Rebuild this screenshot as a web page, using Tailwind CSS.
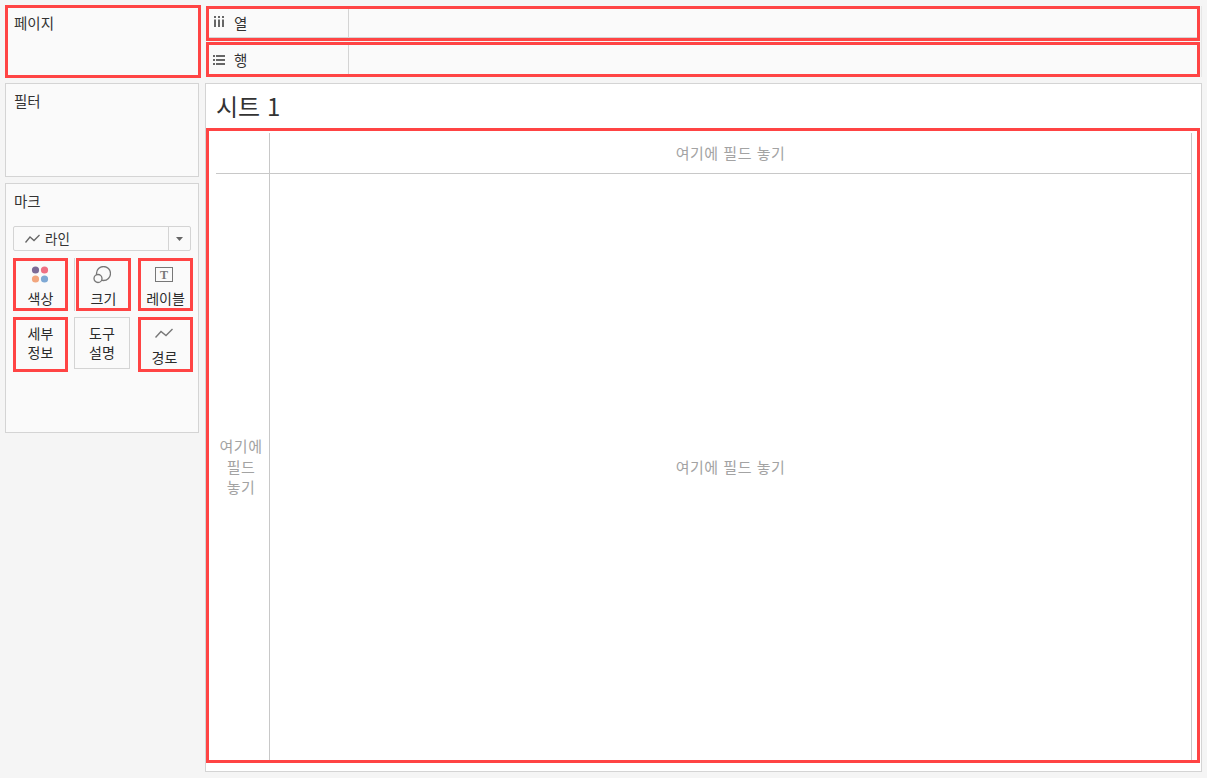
<!DOCTYPE html>
<html lang="ko">
<head>
    <meta charset="UTF-8">
    <title>시트 1</title>
    <script src="https://cdn.jsdelivr.net/npm/@tailwindcss/browser@4"></script>
</head>
<body class="bg-[#f5f5f5] font-['Noto_Sans_CJK_KR','Liberation_Sans',sans-serif] text-[#333]">
    <div class="flex h-screen overflow-hidden">

        <!-- Left column -->
        <aside class="w-[205px] shrink-0 pl-[5px] pt-[5px]">
            <div class="h-[73px] w-[196px] border-[3px] border-[#ff4444] bg-[#fafafa] pl-[6px] pt-[3px] text-[14.5px] leading-[24px]">페이지</div>

            <div class="mt-[5px] h-[94px] w-[194px] border border-[#d4d4d4] bg-[#fafafa] pl-[8px] pt-[5px] text-[14.5px] leading-[24px]">필터</div>

            <div class="mt-[6px] h-[250px] w-[194px] border border-[#d4d4d4] bg-[#fafafa] pt-[5px]">
                <div class="pl-[8px] text-[14.5px] leading-[24px]">마크</div>

                <!-- Mark type -->
                <div class="mt-[13px] ml-[7px] flex h-[25px] w-[178px] items-center rounded-[2px] border border-[#d4d4d4]">
                    <div class="flex flex-1 items-center pl-[11px]">
                        <svg width="15" height="10" viewBox="0 0 15 10" fill="none" stroke="#666" stroke-width="1.3"><path d="M0.5 8.5 L5 3 L9 6.5 L14.5 1"/></svg>
                        <span class="-mt-px ml-[5px] text-[13.5px] leading-[20px]">라인</span>
                    </div>
                    <div class="flex h-full w-[22px] items-center justify-center border-l border-[#d4d4d4] pr-px">
                        <svg width="7" height="4" viewBox="0 0 7 4"><path d="M0 0 H7 L3.5 4 Z" fill="#666"/></svg>
                    </div>
                </div>

                <!-- Mark cards, first row -->
                <div class="mt-[7px] ml-[7px] flex text-[14px] leading-[19px] text-[#2b2b2b]">
                    <div class="flex h-[53px] w-[55px] flex-col items-center border-[3px] border-[#ff4444] pt-[5px]">
                        <svg class="-ml-[2px]" width="18" height="18" viewBox="0 0 18 18">
                            <circle cx="4.5" cy="4" r="3.6" fill="#7b6a96"/>
                            <circle cx="13.5" cy="4" r="3.6" fill="#ef7083"/>
                            <circle cx="4.5" cy="13" r="3.6" fill="#f2a67e"/>
                            <circle cx="13.5" cy="13" r="3.6" fill="#7ea8d4"/>
                        </svg>
                        <span class="mt-[5px]">색상</span>
                    </div>
                    <div class="ml-[6px] border-l border-[#d4d4d4] pl-px">
                        <div class="flex h-[53px] w-[55px] flex-col items-center border-[3px] border-[#ff4444] pt-[5px]">
                            <svg class="-ml-[3px]" width="18" height="18" viewBox="0 0 18 18" fill="none" stroke="#777" stroke-width="1.3">
                                <circle cx="10.5" cy="7.5" r="7"/>
                                <circle cx="5" cy="12.5" r="4" fill="#fafafa"/>
                            </svg>
                            <span class="mt-[5px]">크기</span>
                        </div>
                    </div>
                    <div class="ml-[7px] flex h-[53px] w-[55px] flex-col items-center border-[3px] border-[#ff4444] pt-[6px]">
                        <div class="-ml-[3px] flex h-[15px] w-[18px] items-center justify-center border-[1.5px] border-[#777] font-['Liberation_Serif',serif] text-[12px] leading-none font-bold text-[#777]">T</div>
                        <span class="mt-[7px]">레이블</span>
                    </div>
                </div>

                <!-- Mark cards, second row -->
                <div class="mt-[6px] ml-[7px] flex items-start text-[14px] leading-[19px] text-[#2b2b2b]">
                    <div class="flex h-[55px] w-[55px] flex-col items-center border-[3px] border-[#ff4444] pt-[4px]">
                        <span>세부</span>
                        <span>정보</span>
                    </div>
                    <div class="ml-[6px] flex h-[52px] w-[56px] flex-col items-center border border-[#d4d4d4] pt-[6px]">
                        <span>도구</span>
                        <span>설명</span>
                    </div>
                    <div class="ml-[8px] flex h-[55px] w-[55px] flex-col items-center border-[3px] border-[#ff4444] pt-[8px]">
                        <svg class="-ml-[3px]" width="18" height="11" viewBox="0 0 18 11" fill="none" stroke="#777" stroke-width="1.4"><path d="M0.5 9.5 L6 3.5 L11 7.5 L17.5 1"/></svg>
                        <span class="-ml-[2px] mt-[9px]">경로</span>
                    </div>
                </div>
            </div>
        </aside>

        <!-- Right column -->
        <main class="flex w-[997px] shrink-0 flex-col pt-[6px]">
            <div class="ml-px border-r border-[#e6e6e6] pr-px">
                <!-- Columns shelf -->
                <div class="h-[35px] border-[3px] border-[#ff4444] bg-[#fafafa]">
                    <div class="flex h-full border-b border-[#d4d4d4]">
                        <div class="flex w-[139px] items-center pl-[5px]">
                            <svg class="-mt-[3px]" width="10" height="11" viewBox="0 0 10 11" fill="#666">
                                <rect x="0" y="0" width="2" height="2"/><rect x="0" y="3.5" width="2" height="7.5"/>
                                <rect x="4" y="0" width="2" height="2"/><rect x="4" y="3.5" width="2" height="7.5"/>
                                <rect x="8" y="0" width="2" height="2"/><rect x="8" y="3.5" width="2" height="7.5"/>
                            </svg>
                            <span class="ml-[10px] text-[14.5px] leading-[24px]">열</span>
                        </div>
                        <div class="flex-1 border-l border-[#d4d4d4]"></div>
                    </div>
                </div>
                <!-- Rows shelf -->
                <div class="mt-px flex h-[35px] border-[3px] border-[#ff4444] bg-[#fafafa]">
                    <div class="flex w-[139px] items-center pl-[4px]">
                        <svg width="12" height="10" viewBox="0 0 12 10" fill="#666">
                            <rect x="0" y="0" width="2" height="2"/><rect x="3" y="0" width="9" height="2"/>
                            <rect x="0" y="4" width="2" height="2"/><rect x="3" y="4" width="9" height="2"/>
                            <rect x="0" y="8" width="2" height="2"/><rect x="3" y="8" width="9" height="2"/>
                        </svg>
                        <span class="ml-[9px] text-[14.5px] leading-[24px]">행</span>
                    </div>
                    <div class="flex-1 border-l border-[#d4d4d4]"></div>
                </div>
            </div>

            <!-- Sheet -->
            <section class="mt-[6px] h-[689px] border border-[#d4d4d4] bg-white">
                <h1 class="flex h-[44px] items-center pl-[10px] text-[24px] leading-none text-[#333]">시트 1</h1>
                <div class="mr-px h-[635px] border-[3px] border-[#ff4444] pt-[2px] pr-[5px] pl-[7px]">
                    <div class="grid h-full grid-cols-[54px_1fr] grid-rows-[41px_1fr] border-r border-[#c8c8c8] text-[15px] tracking-[0.5px] text-[#a3a3a3]">
                        <div class="border-r border-b border-[#c8c8c8]"></div>
                        <div class="flex items-center justify-center border-b border-[#c8c8c8]">여기에 필드 놓기</div>
                        <div class="flex items-center justify-center border-r border-[#c8c8c8] pr-[3px] text-center leading-[20.5px]">여기에<br>필드<br>놓기</div>
                        <div class="flex items-center justify-center">여기에 필드 놓기</div>
                    </div>
                </div>
            </section>
        </main>
    </div>
</body>
</html>
